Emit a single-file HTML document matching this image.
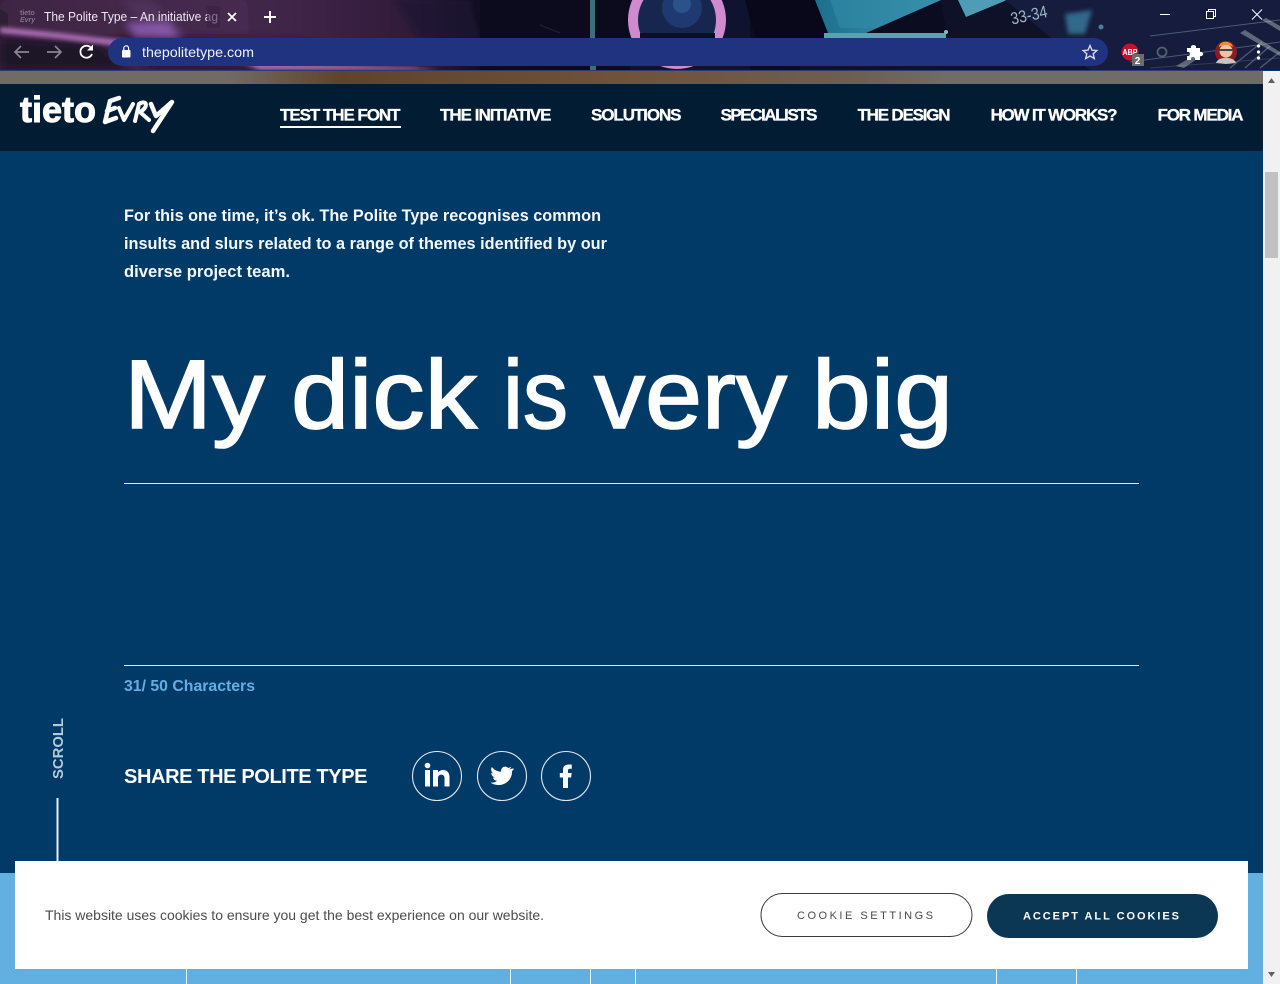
<!DOCTYPE html>
<html><head><meta charset="utf-8"><title>The Polite Type</title>
<style>
html,body{margin:0;padding:0;width:1280px;height:984px;overflow:hidden;background:#013a67}
svg{position:absolute;left:0;top:0;display:block}
text{font-family:"Liberation Sans",sans-serif}
</style></head><body>
<svg width="1280" height="984" viewBox="0 0 1280 984" xmlns="http://www.w3.org/2000/svg">
<defs>
<linearGradient id="p" x1="0" y1="0" x2="1" y2="0"><stop offset="0" stop-color="#3b2040"/><stop offset=".55" stop-color="#43264c"/><stop offset=".85" stop-color="#2f1a38"/><stop offset="1" stop-color="#0e0c20"/></linearGradient>
<linearGradient id="t" x1="0" y1="0" x2="1" y2="0"><stop offset="0" stop-color="#1d6f8d"/><stop offset="1" stop-color="#3f97b2"/></linearGradient>
<linearGradient id="br" x1="0" y1="0" x2="1" y2="0"><stop offset="0" stop-color="#716b65"/><stop offset=".18" stop-color="#716b65"/><stop offset=".27" stop-color="#5f432b"/><stop offset=".5" stop-color="#71523b"/><stop offset=".68" stop-color="#6d5f52"/><stop offset=".75" stop-color="#716c67"/><stop offset="1" stop-color="#6f6b67"/></linearGradient>
<filter id="b2" x="-20%" y="-50%" width="140%" height="200%"><feGaussianBlur stdDeviation="2"/></filter>
<filter id="b4" x="-20%" y="-50%" width="140%" height="200%"><feGaussianBlur stdDeviation="4"/></filter>
</defs>
<!-- browser background -->
<rect width="1280" height="70" fill="#0c0c20"/>
<rect width="490" height="70" fill="url(#p)"/>
<path d="M0 38L100 44L130 70H0Z" fill="#1c1226" filter="url(#b4)"/>
<path d="M120 36L300 40L430 70H150Z" fill="#2a1632" filter="url(#b4)"/>
<path d="M0 9L8 14V32L0 34Z" fill="#2a1a30"/>
<path d="M0 27L60 33L130 41L125 47L60 39L0 33Z" fill="#c07ac8" opacity=".85" filter="url(#b2)"/>
<path d="M120 0L150 0L190 38L160 38Z" fill="#6c4a7c" opacity=".3" filter="url(#b4)"/>
<path d="M125 22L170 22L180 38L135 38Z" fill="#9a63c8" opacity=".7" filter="url(#b4)"/>
<path d="M240 62L410 67L440 70H260Z" fill="#c07ac8" opacity=".85" filter="url(#b2)"/>
<path d="M247 0H290L300 33H252Z" fill="#3f2649" opacity=".7"/>
<path d="M395 0H470L480 38H420Z" fill="#1a1230" opacity=".7" filter="url(#b2)"/>
<path d="M480 0H640V70H480Z" fill="#0c0b1e"/>
<rect x="590" y="0" width="5" height="38" fill="#3c6f7c"/>
<rect x="590" y="66" width="6" height="4" fill="#3c6f7c"/>
<path d="M540 25L560 33" stroke="#232336" stroke-width="1"/>
<path d="M630 0H750V70H630Z" fill="#0f1330"/>
<circle cx="677" cy="20" r="44" fill="#16264f"/>
<circle cx="682" cy="8" r="20" fill="#1e3a70"/>
<circle cx="682" cy="4" r="9" fill="#2c528b"/>
<circle cx="677" cy="20" r="44" fill="none" stroke="#cf8ad0" stroke-width="10"/>
<rect x="640" y="33" width="75" height="6" fill="#0c0f23"/>
<path d="M745 0H815L830 38H755Z" fill="#08081a"/>
<path d="M815 0H941L866 33H828Z" fill="url(#t)"/>
<path d="M824 33H946V38H824Z" fill="#5aa2b2"/>
<path d="M830 0H941L875 28H840Z" fill="#328aa8" opacity=".6"/>
<path d="M941 0H1280V70H800V38H946V30Z" fill="#0f1129"/>
<path d="M958 0H1007L966 17Z" fill="#4f9cb6"/>
<path d="M1005 0H1280V70H1090Z" fill="#151c3d"/>
<path d="M1065 14L1092 10L1085 34H1068Z" fill="#4ba6c9" opacity=".55" filter="url(#b2)"/>
<circle cx="1101" cy="27" r="2.500" fill="#5fa8c8" opacity=".7"/>
<circle cx="946" cy="32" r="2" fill="#7ec0c4"/>
<g fill="none" stroke="#8dabb0" opacity=".45">
<path d="M1150 36L1280 20M1130 62L1280 42" stroke-width="1"/>
<path d="M1230 68L1262 42M1245 68L1270 46M1260 68L1280 52" stroke-width="1.400"/>
<path d="M1150 68L1280 58" stroke-width="1" opacity=".5"/>
</g>
<g fill="#cfd8d0" opacity=".4">
<path d="M1176 66L1200 52L1204 54L1184 68Z"/><path d="M1245 30L1280 52V56L1240 33Z"/><path d="M1266 18L1280 26V31L1262 20Z"/>
</g>
<text x="1010" y="21" font-size="17" fill="#9db7c3" transform="rotate(-12 1028 13)" textLength="37" lengthAdjust="spacingAndGlyphs">33-34</text>
<!-- tab -->
<path d="M8 0H240C246 0 248 4 248 8V34H0V8C0 4 4 0 8 0Z" fill="#fff" opacity=".025"/>
<text x="20" y="15" font-size="7" fill="#84728a" font-weight="bold">tieto</text>
<text x="20" y="22" font-size="7" fill="#84728a" font-style="italic" font-weight="bold">Evry</text>
<text x="44" y="21" font-size="12.500" fill="#eee7f0" textLength="174" lengthAdjust="spacingAndGlyphs">The Polite Type – An initiative ag</text>
<rect x="207" y="6" width="13" height="22" fill="#3b1f44" opacity=".6"/>
<path d="M228 13L236 21M236 13L228 21" stroke="#fff" stroke-width="1.700"/>
<path d="M270 11V23M264 17H276" stroke="#fff" stroke-width="2"/>
<!-- toolbar -->
<path d="M29 52H15M21 46L15 52L21 58" stroke="#8b8590" stroke-width="1.700" fill="none"/>
<path d="M47 52H61M55 46L61 52L55 58" stroke="#8b8590" stroke-width="1.700" fill="none"/>
<path d="M91.500 48.500A6 6 0 1 0 92 54" stroke="#fff" stroke-width="1.800" fill="none"/>
<path d="M93 44.500V50.500H87Z" fill="#fff"/>
<rect x="108" y="38" width="1000" height="28" rx="14" fill="#1f3380"/>
<rect x="122" y="50" width="8.500" height="7.500" rx="1" fill="#fff"/>
<path d="M123.800 50V48.200A2.400 2.400 0 0 1 128.600 48.200V50" stroke="#fff" stroke-width="1.200" fill="none"/>
<text x="142" y="57" font-size="14" fill="#f0f0f8" textLength="112" lengthAdjust="spacingAndGlyphs">thepolitetype.com</text>
<path d="M1090 45.500L1092 50.200L1096.800 50.600L1093.200 53.800L1094.300 58.600L1090 56L1085.700 58.600L1086.800 53.800L1083.200 50.600L1088 50.200Z" fill="none" stroke="#d8d8e4" stroke-width="1.400"/>
<circle cx="1130" cy="52" r="8.500" fill="#c8102e"/>
<text x="1122.500" y="55" font-size="8" font-weight="bold" fill="#fff" textLength="15" lengthAdjust="spacingAndGlyphs">ABP</text>
<rect x="1132" y="54" width="12" height="12" fill="#6c6c6c"/>
<text x="1134.700" y="64" font-size="10" font-weight="bold" fill="#fff">2</text>
<circle cx="1162" cy="52" r="4.500" fill="none" stroke="#54606d" stroke-width="1.800"/>
<path d="M1187 48H1191C1190 44 1197 44 1196 48H1200V52C1204 51 1204 57 1200 56V60H1195C1196 56 1190 56 1191 60H1187V56C1191 57 1191 51 1187 52Z" fill="#fff"/>
<circle cx="1226" cy="52" r="11" fill="#8a1d22"/>
<path d="M1216 63C1218 56 1234 56 1236 63L1226 64Z" fill="#c9c5bd"/>
<circle cx="1226" cy="51" r="6.500" fill="#efc3a5"/>
<path d="M1219 47C1219 40 1232 40 1233 47C1229 44 1223 45 1219 47Z" fill="#e4922f"/>
<path d="M1219 50H1233" stroke="#3d4a4a" stroke-width="2"/>
<circle cx="1258.500" cy="46" r="1.600" fill="#fff"/><circle cx="1258.500" cy="52" r="1.600" fill="#fff"/><circle cx="1258.500" cy="58" r="1.600" fill="#fff"/>
<path d="M1160 14.500H1170" stroke="#fff" stroke-width="1"/>
<rect x="1206.500" y="11.500" width="7" height="7" fill="none" stroke="#fff"/><path d="M1208.500 11.500V9.500H1215.500V16.500H1213.500" fill="none" stroke="#fff"/>
<path d="M1252 9.500L1262 19.500M1262 9.500L1252 19.500" stroke="#fff" stroke-width="1"/>
<rect y="70" width="1263" height="1" fill="#2d3a72"/>
<!-- strip below browser -->
<rect y="71" width="1263" height="13" fill="url(#br)"/>
<!-- header -->
<rect y="84" width="1263" height="67" fill="#021d33"/>
<text x="20" y="122" font-size="36" font-weight="bold" fill="#fff" textLength="76" lengthAdjust="spacingAndGlyphs" stroke="#fff" stroke-width="1">tieto</text>
<g stroke="#fff" fill="none" stroke-linecap="round" stroke-linejoin="round">
<path d="M110 101L105 122L116 118M107 111L115 108M110 101L119 98" stroke-width="4.500"/>
<path d="M119 108L124 120L133 104" stroke-width="4"/>
<path d="M135 121L139 104C147 99 149 107 140 112L149 120" stroke-width="4"/>
<path d="M151 104L156 116L172 102L153 131" stroke-width="4.500"/>
</g>
<g font-size="17" font-weight="bold" fill="#fff" stroke="#fff" stroke-width=".3">
<text x="280" y="120.500" textLength="120.500" lengthAdjust="spacing">TEST THE FONT</text>
<text x="440" y="120.500" textLength="111.500" lengthAdjust="spacing">THE INITIATIVE</text>
<text x="591" y="120.500" textLength="90.500" lengthAdjust="spacing">SOLUTIONS</text>
<text x="720.500" y="120.500" textLength="97" lengthAdjust="spacing">SPECIALISTS</text>
<text x="857.500" y="120.500" textLength="93" lengthAdjust="spacing">THE DESIGN</text>
<text x="990.500" y="120.500" textLength="127" lengthAdjust="spacing">HOW IT WORKS?</text>
<text x="1157.500" y="120.500" textLength="86" lengthAdjust="spacing">FOR MEDIA</text>
</g>
<rect x="280" y="126" width="121" height="2" fill="#fff"/>
<!-- main -->
<rect y="151" width="1263" height="722" fill="#013a67"/>
<g font-size="16.500" font-weight="bold" fill="#f4f8fb">
<text x="124" y="221" textLength="477" lengthAdjust="spacingAndGlyphs">For this one time, it’s ok. The Polite Type recognises common</text>
<text x="124" y="249" textLength="483" lengthAdjust="spacingAndGlyphs">insults and slurs related to a range of themes identified by our</text>
<text x="124" y="277" textLength="166" lengthAdjust="spacingAndGlyphs">diverse project team.</text>
</g>
<g font-size="97" fill="#fff" stroke="#fff" stroke-width="1.600">
<text x="124" y="428" textLength="141" lengthAdjust="spacingAndGlyphs">My</text>
<text x="291" y="428" textLength="186" lengthAdjust="spacingAndGlyphs">dick</text>
<text x="503" y="428" textLength="65" lengthAdjust="spacingAndGlyphs">is</text>
<text x="594" y="428" textLength="193" lengthAdjust="spacingAndGlyphs">very</text>
<text x="812" y="428" textLength="141" lengthAdjust="spacingAndGlyphs">big</text>
</g>
<rect x="124" y="483" width="1015" height="1" fill="#dfe9f1"/>
<rect x="124" y="665" width="1015" height="1" fill="#dfe9f1"/>
<text x="124" y="691" font-size="15.500" font-weight="bold" fill="#61afe2" textLength="131" lengthAdjust="spacingAndGlyphs">31/ 50 Characters</text>
<text x="124" y="783" font-size="20" font-weight="bold" fill="#fff" textLength="243.500" lengthAdjust="spacing">SHARE THE POLITE TYPE</text>
<g fill="none" stroke="#dfe9f1" stroke-width="1.100">
<ellipse cx="437" cy="776" rx="24.500" ry="24.500"/>
<ellipse cx="502" cy="776" rx="24.500" ry="24.500"/>
<ellipse cx="566" cy="776" rx="24.500" ry="24.500"/>
</g>
<g fill="#fff">
<rect x="425" y="770" width="5" height="16.500"/><circle cx="427.500" cy="765.500" r="2.800"/>
<path d="M433 770H438V772.500C440 769 449.500 768 449.500 777V786.500H444.500V778C444.500 773.500 438 773.500 438 778V786.500H433Z"/>
<path transform="translate(-2,0)" d="M514 768.500C513 769 512 769.300 511.200 769.400C512.200 768.800 512.900 767.900 513.200 766.800C512.300 767.400 511.300 767.800 510.200 768C507.400 765 502.300 767.500 503.200 771.800C499.500 771.600 496.100 769.800 493.800 767C492.500 769.200 493.200 772 495.200 773.400C494.500 773.400 493.800 773.200 493.200 772.800C493.200 775 494.800 776.900 496.900 777.400C496.200 777.600 495.500 777.600 494.800 777.500C495.400 779.400 497.100 780.700 499.100 780.700C497.200 782.200 494.800 782.900 492.400 782.600C502.800 789.100 514.700 781.800 514 771C515 770.400 515.700 769.600 516 768.800Z"/>
<path d="M563 788V777.500H559.800V773H563V769.800C563 765.500 565.800 764 571.800 764.600V768.800C568.800 768.500 568 769 568 770.800V773H571.700L571.100 777.500H568V788Z"/>
</g>
<text transform="translate(63,779) rotate(-90)" font-size="15" font-weight="bold" fill="#b4cbdc" textLength="61" lengthAdjust="spacingAndGlyphs">SCROLL</text>
<rect x="56.500" y="798" width="2" height="64" fill="#e8eff5"/>
<!-- lower blue -->
<rect y="873" width="1263" height="111" fill="#62afe1"/>
<g fill="#e4f1fa">
<rect x="186" y="960" width="1" height="24"/><rect x="510" y="960" width="1" height="24"/>
<rect x="590" y="960" width="1" height="24"/><rect x="635" y="960" width="1" height="24"/>
<rect x="996" y="960" width="1" height="24"/><rect x="1076" y="960" width="1" height="24"/>
</g>
<!-- cookie -->
<rect x="15" y="861" width="1233" height="108" fill="#fff"/>
<text x="45" y="920" font-size="14" fill="#4b4b4b" textLength="499" lengthAdjust="spacingAndGlyphs">This website uses cookies to ensure you get the best experience on our website.</text>
<rect x="761" y="893.500" width="211" height="43" rx="21.500" fill="#fff" stroke="#3a3a3a" stroke-width="1"/>
<text x="797" y="919" font-size="11" fill="#4a4a4a" textLength="136">COOKIE SETTINGS</text>
<rect x="987" y="894" width="231" height="44" rx="22" fill="#0b3654"/>
<text x="1023" y="919.500" font-size="11" fill="#fff" font-weight="bold" textLength="156">ACCEPT ALL COOKIES</text>
<!-- scrollbar -->
<rect x="1263" y="71" width="17" height="913" fill="#f1f1f1"/>
<path d="M1268 83L1271.500 78L1275 83Z" fill="#606060"/>
<rect x="1265" y="172" width="13" height="86" fill="#c1c1c1"/>
<path d="M1268 972L1271.500 977L1275 972Z" fill="#606060"/>
</svg>
</body></html>
